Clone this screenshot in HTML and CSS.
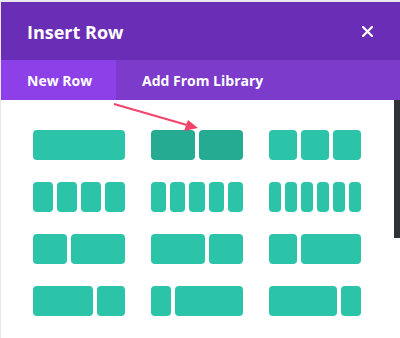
FILE: index.html
```html
<!DOCTYPE html>
<html lang="en">
<head>
    <meta charset="UTF-8">
    <meta name="viewport" content="width=device-width, initial-scale=1.0">
    <title>Insert Row</title>
    <link rel="stylesheet" href="styles.css">
</head>
<body>
    <div class="modal">
        <div class="modal-header">
            <h1>Insert Row</h1>
            <button class="btn-close" aria-label="Close">
                <svg width="11" height="11" viewBox="0 0 11 11">
                    <path d="M1 1 L10 10 M10 1 L1 10" stroke="#fff" stroke-width="2.2" stroke-linecap="square"/>
                </svg>
            </button>
        </div>

        <div class="tabs">
            <div class="tab active">New Row</div>
            <div class="tab">Add From Library</div>
        </div>

        <div class="modal-body">
            <svg class="arrow" width="100" height="40" viewBox="0 0 100 40">
                <line x1="13" y1="4" x2="86" y2="25" stroke="#f2436b" stroke-width="2"/>
                <path d="M97 28 L83 31 L87 20 Z" fill="#f2436b"/>
            </svg>

            <div class="layouts">
                <!-- linha 1 -->
                <div class="layout"><span class="col" style="flex: 1"></span></div>
                <div class="layout hover"><span class="col" style="flex: 1"></span><span class="col" style="flex: 1"></span></div>
                <div class="layout"><span class="col" style="flex: 1"></span><span class="col" style="flex: 1"></span><span class="col" style="flex: 1"></span></div>

                <!-- linha 2 -->
                <div class="layout"><span class="col" style="flex: 1"></span><span class="col" style="flex: 1"></span><span class="col" style="flex: 1"></span><span class="col" style="flex: 1"></span></div>
                <div class="layout"><span class="col" style="flex: 1"></span><span class="col" style="flex: 1"></span><span class="col" style="flex: 1"></span><span class="col" style="flex: 1"></span><span class="col" style="flex: 1"></span></div>
                <div class="layout"><span class="col" style="flex: 1"></span><span class="col" style="flex: 1"></span><span class="col" style="flex: 1"></span><span class="col" style="flex: 1"></span><span class="col" style="flex: 1"></span><span class="col" style="flex: 1"></span></div>

                <!-- linha 3 -->
                <div class="layout"><span class="col" style="flex: 34"></span><span class="col" style="flex: 54"></span></div>
                <div class="layout"><span class="col" style="flex: 54"></span><span class="col" style="flex: 34"></span></div>
                <div class="layout"><span class="col" style="flex: 28"></span><span class="col" style="flex: 60"></span></div>

                <!-- linha 4 -->
                <div class="layout"><span class="col" style="flex: 60"></span><span class="col" style="flex: 28"></span></div>
                <div class="layout"><span class="col" style="flex: 20"></span><span class="col" style="flex: 68"></span></div>
                <div class="layout"><span class="col" style="flex: 68"></span><span class="col" style="flex: 20"></span></div>
            </div>
        </div>
    </div>
</body>
</html>
```

FILE: styles.css
```css
:root {
    --header-color: #6a2db6;
    --tabs-color: #7c3bcb;
    --tab-active: #8e40e8;
    --teal: #2bc4a9;
    --teal-hover: #24ab92;
    --scroll-color: #2e3338;
}

* {
    margin: 0;
    padding: 0;
    box-sizing: border-box;
}

body {
    font-family: 'Open Sans', sans-serif;
    background-color: #e8e6ee;
    padding: 2px 0 0 1px;
    height: 338px;
    overflow: hidden;
}

.modal {
    background-color: #ffffff;
    height: 336px;
    display: flex;
    flex-direction: column;
}

.modal-header {
    background-color: var(--header-color);
    height: 58px;
    display: flex;
    align-items: center;
    justify-content: space-between;
    padding: 0 27px 0 26px;
}

.modal-header h1 {
    color: #ffffff;
    font-size: 18px;
    font-weight: 700;
    margin-top: 2px;
}

.btn-close {
    background: none;
    border: none;
    width: 11px;
    height: 11px;
    display: flex;
    cursor: pointer;
}

.tabs {
    background-color: var(--tabs-color);
    height: 40px;
    display: flex;
}

.tab {
    color: #ffffff;
    font-size: 14px;
    font-weight: 700;
    white-space: nowrap;
    padding: 1px 26px 0;
    display: flex;
    align-items: center;
}

.tab.active {
    background-color: var(--tab-active);
    width: 115px;
}

.modal-body {
    position: relative;
    flex: 1;
    margin-right: 6px;
    padding: 30px 0 0 32px;
}

.modal-body::after {
    content: '';
    position: absolute;
    top: 0;
    right: -6px;
    width: 6px;
    height: 138px;
    background-color: var(--scroll-color);
}

.arrow {
    position: absolute;
    top: 0;
    left: 100px;
}

.layouts {
    display: grid;
    grid-template-columns: repeat(3, 92px);
    column-gap: 26px;
    row-gap: 22px;
}

.layout {
    display: flex;
    gap: 4px;
    height: 30px;
}

.col {
    background-color: var(--teal);
    border-radius: 4px;
}

.layout.hover .col {
    background-color: var(--teal-hover);
}
```
